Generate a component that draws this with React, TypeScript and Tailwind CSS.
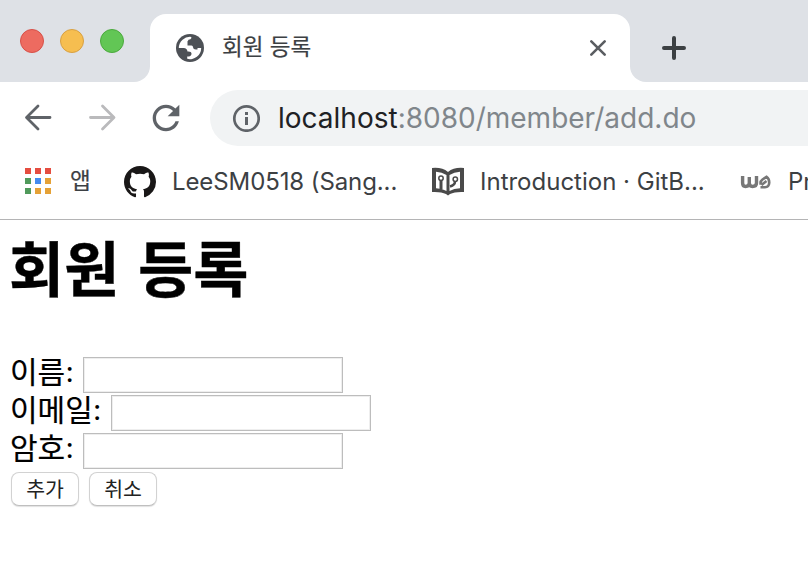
import React from "react";

const ui = "font-['Inter','Noto_Sans_CJK_KR',sans-serif]";

function TabStrip() {
  return (
    <div>
      <div className="h-3.5 bg-[#dee1e6]" />
      <div className="flex h-[68px]">
        <div className="flex w-[150px] items-start gap-4 rounded-br-2xl bg-[#dee1e6] pt-[15px] pl-5">
          <span className="size-6 rounded-full border border-[#d75048] bg-[#ed6b60]" />
          <span className="size-6 rounded-full border border-[#d8a042] bg-[#f6be50]" />
          <span className="size-6 rounded-full border border-[#4ba93d] bg-[#62c655]" />
        </div>
        <div className="w-[480px] bg-[#dee1e6]">
          <div className="flex h-full items-center rounded-t-2xl bg-white pr-[22px] pl-[26px]">
            <svg className="size-7 shrink-0" viewBox="0 0 28 28">
              <circle cx="14" cy="14" r="14" fill="#4d5156" />
              <path
                fill="#fff"
                d="M2.8 14A11.2 11.2 0 0 1 15.3 2.9V4.200Q15 5.600 12.500 5.800Q12 7 11.500 7.200V11.400H15.500Q17 11.400 17 13.300Q17.200 15.600 19.800 15.600H21.500V14H25.200A11.200 11.200 0 0 1 11.200 24.800V22.500H12.600Q15.500 22 15.500 19.500Q15.400 17.500 12.500 17.500H11.500Q11 14 7.800 14Z"
              />
            </svg>
            <span className={`${ui} -mt-0.5 ml-[18px] text-[22.5px] leading-7 text-[#3c4043] [-webkit-text-stroke:0.2px]`}>회원 등록</span>
            <svg className="ml-auto size-5" viewBox="0 0 20 20">
              <path d="M3.300 3.300L16.700 16.700M16.700 3.300L3.300 16.700" stroke="#5a5d61" strokeWidth="2.600" strokeLinecap="round" />
            </svg>
          </div>
        </div>
        <div className="flex-1 rounded-bl-2xl bg-[#dee1e6] pt-[22px] pl-8">
          <svg className="size-6" viewBox="0 0 24 24">
            <path d="M12 2V22M2 12H22" stroke="#3c4043" strokeWidth="4" strokeLinecap="round" />
          </svg>
        </div>
      </div>
    </div>
  );
}

function Toolbar() {
  return (
    <div className="flex h-[72px] items-center pl-[18px]">
      <svg className="size-10 shrink-0" viewBox="0 0 40 40">
        <path d="M32 19.5H9M20 8L8.5 19.5L20 31" fill="none" stroke="#5f6368" strokeWidth="2.8" strokeLinecap="round" strokeLinejoin="round" />
      </svg>
      <svg className="ml-6 size-10 shrink-0" viewBox="0 0 40 40">
        <path d="M8.5 19.5H31M20.500 8L32 19.5L20.500 31" fill="none" stroke="#bababc" strokeWidth="2.8" strokeLinecap="round" strokeLinejoin="round" />
      </svg>
      <svg className="ml-6 size-10 shrink-0" viewBox="0 0 24 24">
        <path
          fill="#5f6368"
          d="M17.65 6.35C16.2 4.9 14.21 4 12 4c-4.42 0-7.99 3.58-7.99 8s3.57 8 7.99 8c3.73 0 6.84-2.55 7.73-6h-2.08c-.82 2.33-3.04 4-5.65 4-3.31 0-6-2.69-6-6s2.69-6 6-6c1.66 0 3.14.69 4.22 1.78L13 11h7V4l-2.35 2.35z"
        />
      </svg>
      <div className="ml-6 flex h-14 flex-1 items-center rounded-l-full bg-[#f1f3f4] pl-[22px]">
        <svg className="size-7 shrink-0" viewBox="0 0 28 28">
          <circle cx="14.500" cy="14.500" r="12.200" fill="none" stroke="#5f6368" strokeWidth="2.700" />
          <path d="M13 8h3v3h-3zM13 13h3v8h-3z" fill="#5f6368" />
        </svg>
        <span className={`${ui} ml-[18px] text-[28px] leading-9 text-[#80868b]`}>
          <span className="text-[#202124]">localhost</span>:8080/member/add.do
        </span>
      </div>
    </div>
  );
}

const appDots = [
  "bg-[#e54d40]", "bg-[#e54d40]", "bg-[#e54d40]",
  "bg-[#509a5b]", "bg-[#438bf0]", "bg-[#e5a136]",
  "bg-[#509a5b]", "bg-[#e5a136]", "bg-[#e5a136]",
];

function BookmarksBar() {
  return (
    <div className={`${ui} flex h-[66px] items-start overflow-hidden border-b border-[#b4b4b5] pt-2.5 text-2xl leading-9 whitespace-nowrap text-[#3c4043]`}>
      <div className="mt-1 ml-[25px] grid shrink-0 grid-cols-3 gap-1">
        {appDots.map((dot, i) => (
          <span key={i} className={`size-1.5 ${dot}`} />
        ))}
      </div>
      <span className="-mt-px ml-[19px] w-[54px] shrink-0 text-[22.5px] [-webkit-text-stroke:0.2px]">앱</span>
      <svg className="mt-0.5 size-8 shrink-0" viewBox="0 0 16 16">
        <path
          fill="#191717"
          d="M8 0C3.58 0 0 3.58 0 8c0 3.54 2.29 6.53 5.47 7.59.4.07.55-.17.55-.38 0-.19-.01-.82-.01-1.49-2.01.37-2.53-.49-2.69-.94-.09-.23-.48-.94-.82-1.13-.28-.15-.68-.52-.01-.53.63-.01 1.08.58 1.23.82.72 1.21 1.87.87 2.33.66.07-.52.28-.87.51-1.07-1.78-.2-3.64-.89-3.64-3.95 0-.87.31-1.59.82-2.15-.08-.2-.36-1.02.08-2.12 0 0 .67-.21 2.2.82.64-.18 1.32-.27 2-.27s1.36.09 2 .27c1.53-1.04 2.2-.82 2.2-.82.44 1.1.16 1.92.08 2.12.51.56.82 1.27.82 2.15 0 3.07-1.87 3.75-3.65 3.95.29.25.54.73.54 1.48 0 1.07-.01 1.93-.01 2.2 0 .21.15.46.55.38A8.01 8.01 0 0016 8c0-4.42-3.58-8-8-8z"
        />
      </svg>
      <span className="ml-4 w-[260px] shrink-0 tracking-[-0.1px]">LeeSM0518 (Sang...</span>
      <svg className="mt-0.5 size-8 shrink-0" viewBox="0 0 32 32">
        <path fill="#4a4a4a" d="M0 2Q10 1 16 6Q22 1 32 2V26Q23 25.500 18 28L16 29.500L14 28Q9 25.500 0 26Z" />
        <path fill="#fff" d="M4 5.800Q10 6 14.500 9V25Q10 22.300 4 22.300ZM28 5.800Q22 6 17.500 9V25Q22 22.300 28 22.300Z" />
        <g fill="none" stroke="#4a4a4a">
          <circle cx="9" cy="12.200" r="2.200" strokeWidth="1.500" />
          <path d="M9 14.500V23" strokeWidth="3" />
          <circle cx="23.300" cy="13.200" r="2.200" strokeWidth="1.500" />
          <path d="M23 15.500Q23 19 18 20.500" strokeWidth="2.500" />
        </g>
      </svg>
      <span className="ml-4 w-[260px] shrink-0">Introduction · GitB...</span>
      <svg className="mt-0.5 size-8 shrink-0" viewBox="0 0 32 32">
        <g fill="none" stroke="#777">
          <path d="M2.600 10V17Q2.600 20.500 5.500 20.500Q9.300 20.500 9.300 17V11M9.300 17Q9.300 20.500 12.500 20.500Q16.500 20.500 16.500 17V10" strokeWidth="3.400" />
          <path d="M20.800 18.500Q19.800 15.500 22.500 13.500L26.500 10.800Q29.500 13 29.200 17Q29 21.200 25 21.200H20.500M21.500 19L26.500 15" strokeWidth="2.600" />
        </g>
      </svg>
      <span className="ml-4 shrink-0">Pr</span>
    </div>
  );
}

function Field({ label, type = "text" }: { label: string; type?: string }) {
  return (
    <label className="flex h-[38px] items-start text-[30px] leading-[30px]">
      <span className="[-webkit-text-stroke:0.2px]">{label}</span>
      <span className="w-[18px] shrink-0 font-['Liberation_Serif',serif] text-[32px] leading-8">:</span>
      <input
        type={type}
        className="mt-[2px] h-9 w-[260px] border border-[#bdbdbd] bg-white px-1 text-[22px] shadow-[inset_0_0_0_1px_#eeeeee] outline-none"
      />
    </label>
  );
}

function PageButton({ children }: { children: React.ReactNode }) {
  return (
    <button
      type="button"
      className="flex h-[34px] w-[68px] items-center justify-center rounded-lg border border-[#d2d2d2] border-b-[#bfbfbf] bg-white pb-0.5 text-[20.500px] leading-6 text-[#222] shadow-[0_1px_1px_rgba(0,0,0,0.12)]"
    >
      {children}
    </button>
  );
}

export default function App() {
  return (
    <div className="h-[572px] w-[808px] overflow-hidden bg-white">
      <TabStrip />
      <Toolbar />
      <BookmarksBar />
      <main className="pl-2.5 font-['Noto_Sans_CJK_KR',sans-serif] text-black">
        <h1 className="-ml-px h-[135px] pt-[6px] text-[60px] leading-[80px] font-bold whitespace-nowrap [-webkit-text-stroke:0.4px] [word-spacing:5px]">회원 등록</h1>
        <form>
          <Field label="이름" />
          <Field label="이메일" />
          <Field label="암호" type="password" />
          <div className="flex gap-2.5 pt-[3px] pl-px">
            <PageButton>추가</PageButton>
            <PageButton>취소</PageButton>
          </div>
        </form>
      </main>
    </div>
  );
}
